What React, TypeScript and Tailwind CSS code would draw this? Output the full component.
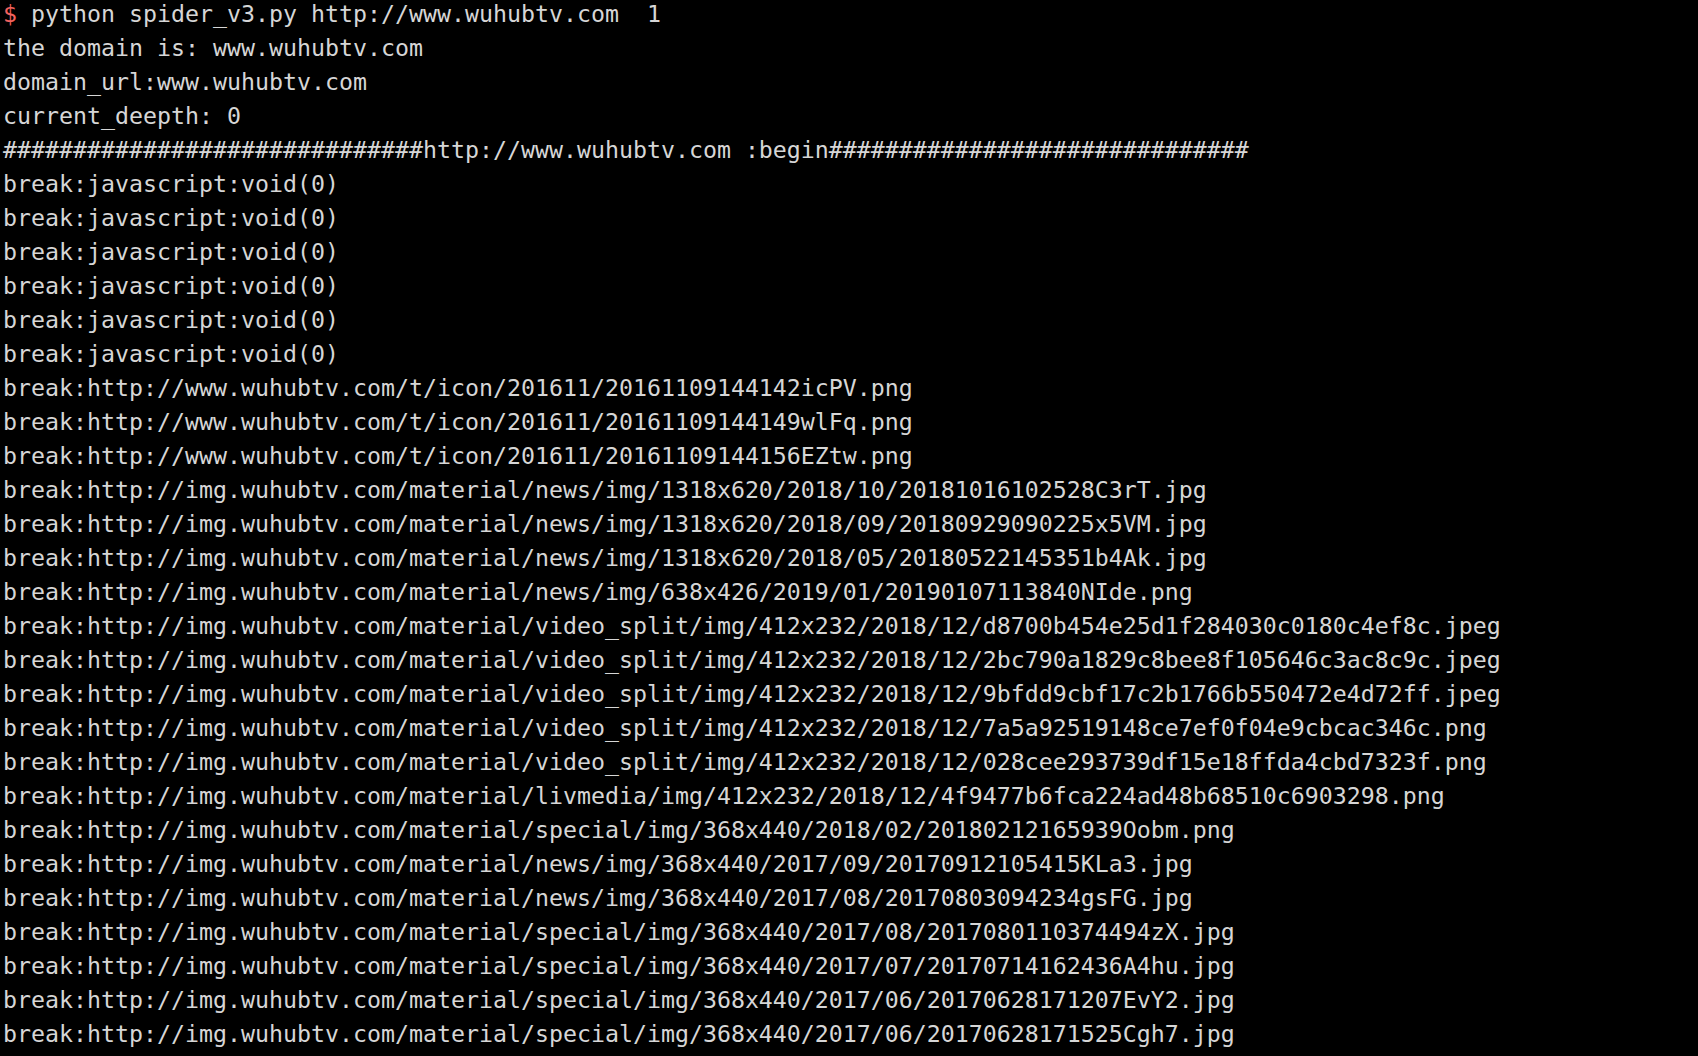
const lines: string[] = [
  "the domain is: www.wuhubtv.com",
  "domain_url:www.wuhubtv.com",
  "current_deepth: 0",
  "##############################http://www.wuhubtv.com :begin##############################",
  "break:javascript:void(0)",
  "break:javascript:void(0)",
  "break:javascript:void(0)",
  "break:javascript:void(0)",
  "break:javascript:void(0)",
  "break:javascript:void(0)",
  "break:http://www.wuhubtv.com/t/icon/201611/20161109144142icPV.png",
  "break:http://www.wuhubtv.com/t/icon/201611/20161109144149wlFq.png",
  "break:http://www.wuhubtv.com/t/icon/201611/20161109144156EZtw.png",
  "break:http://img.wuhubtv.com/material/news/img/1318x620/2018/10/20181016102528C3rT.jpg",
  "break:http://img.wuhubtv.com/material/news/img/1318x620/2018/09/20180929090225x5VM.jpg",
  "break:http://img.wuhubtv.com/material/news/img/1318x620/2018/05/20180522145351b4Ak.jpg",
  "break:http://img.wuhubtv.com/material/news/img/638x426/2019/01/20190107113840NIde.png",
  "break:http://img.wuhubtv.com/material/video_split/img/412x232/2018/12/d8700b454e25d1f284030c0180c4ef8c.jpeg",
  "break:http://img.wuhubtv.com/material/video_split/img/412x232/2018/12/2bc790a1829c8bee8f105646c3ac8c9c.jpeg",
  "break:http://img.wuhubtv.com/material/video_split/img/412x232/2018/12/9bfdd9cbf17c2b1766b550472e4d72ff.jpeg",
  "break:http://img.wuhubtv.com/material/video_split/img/412x232/2018/12/7a5a92519148ce7ef0f04e9cbcac346c.png",
  "break:http://img.wuhubtv.com/material/video_split/img/412x232/2018/12/028cee293739df15e18ffda4cbd7323f.png",
  "break:http://img.wuhubtv.com/material/livmedia/img/412x232/2018/12/4f9477b6fca224ad48b68510c6903298.png",
  "break:http://img.wuhubtv.com/material/special/img/368x440/2018/02/20180212165939Oobm.png",
  "break:http://img.wuhubtv.com/material/news/img/368x440/2017/09/20170912105415KLa3.jpg",
  "break:http://img.wuhubtv.com/material/news/img/368x440/2017/08/20170803094234gsFG.jpg",
  "break:http://img.wuhubtv.com/material/special/img/368x440/2017/08/2017080110374494zX.jpg",
  "break:http://img.wuhubtv.com/material/special/img/368x440/2017/07/20170714162436A4hu.jpg",
  "break:http://img.wuhubtv.com/material/special/img/368x440/2017/06/20170628171207EvY2.jpg",
  "break:http://img.wuhubtv.com/material/special/img/368x440/2017/06/20170628171525Cgh7.jpg",
];

export default function App() {
  return (
    <div className="h-[1056px] w-[1698px] overflow-hidden bg-black">
      <div className="-mt-[3px] pl-[3px] font-['DejaVu_Sans_Mono',monospace] text-[23.25px] leading-[34px] whitespace-pre text-[#d6d6d6]">
        <div>
          <span className="text-[#f2625e]">$</span> python spider_v3.py http://www.wuhubtv.com  1
        </div>
        {lines.map((l, i) => (
          <div key={i}>{l}</div>
        ))}
      </div>
    </div>
  );
}
